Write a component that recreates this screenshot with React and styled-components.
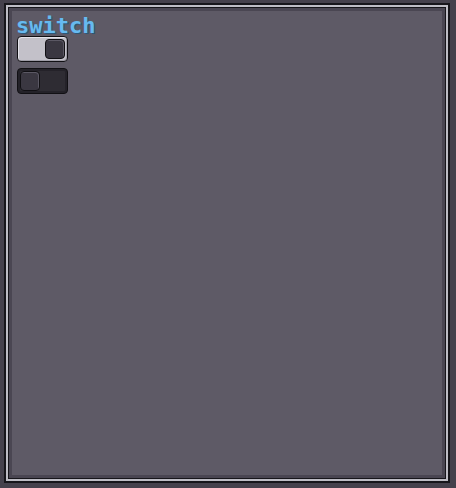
import React, { useState } from 'react';
import styled, { createGlobalStyle, css } from 'styled-components';

const Global = createGlobalStyle`
  html, body {
    margin: 0;
    padding: 0;
    background: #45414c;
    font-family: "DejaVu Sans Mono", monospace;
  }
`;

// pixel frame: dark outline, light ring, dark line, shadow band
const Frame = styled.div`
  box-sizing: border-box;
  width: 446px;
  height: 480px;
  margin: 3px 0 0 4px;
  border: 2px solid #17161b;
  background: #5e5a66;
  box-shadow:
    inset 0 0 0 2px #bebdc5,
    inset 0 0 0 3px #17161b,
    inset 0 0 0 6px #4a4652;
  padding: 9px 0 0 11px;
  display: flex;
  flex-direction: column;
  align-items: flex-start;
`;

const Title = styled.div`
  font-size: 22px;
  font-weight: bold;
  line-height: 22px;
  padding-top: 1px;
  margin-bottom: -1px;
  margin-left: -1px;
  color: #66baf0;
  text-shadow: 1px 1px 0 #2d5676;
`;

const List = styled.div`
  display: flex;
  flex-direction: column;
  gap: 6px;
`;

const Track = styled.button`
  box-sizing: border-box;
  width: 51px;
  height: 26px;
  padding: 2px;
  border: 1px solid #111014;
  border-radius: 4px;
  cursor: pointer;
  display: flex;
  align-items: center;
  ${p => p.on ? css`
    justify-content: flex-end;
    background: #c3c1c9;
    box-shadow: inset 1px 1px 0 #e4e3ea, inset -1px -1px 0 #9f9da7;
  ` : css`
    justify-content: flex-start;
    background: #2e2c33;
    box-shadow: inset 0 0 0 2px #242229;
  `}
`;

const Knob = styled.span`
  box-sizing: border-box;
  width: 20px;
  height: 20px;
  border: 1px solid #111014;
  border-radius: 4px;
  background: #3a3741;
  box-shadow: inset -1px 1px 0 #5b5864;
`;

const Switch = ({ on, onToggle }) => (
  <Track on={on} onClick={onToggle}>
    <Knob />
  </Track>
);

export default function App() {
  const [vals, setVals] = useState([true, false]);
  const toggle = i => setVals(v => v.map((x, j) => (j === i ? !x : x)));
  return (
    <>
      <Global />
      <Frame>
        <Title>switch</Title>
        <List>
          {vals.map((v, i) => (
            <Switch key={i} on={v} onToggle={() => toggle(i)} />
          ))}
        </List>
      </Frame>
    </>
  );
}
